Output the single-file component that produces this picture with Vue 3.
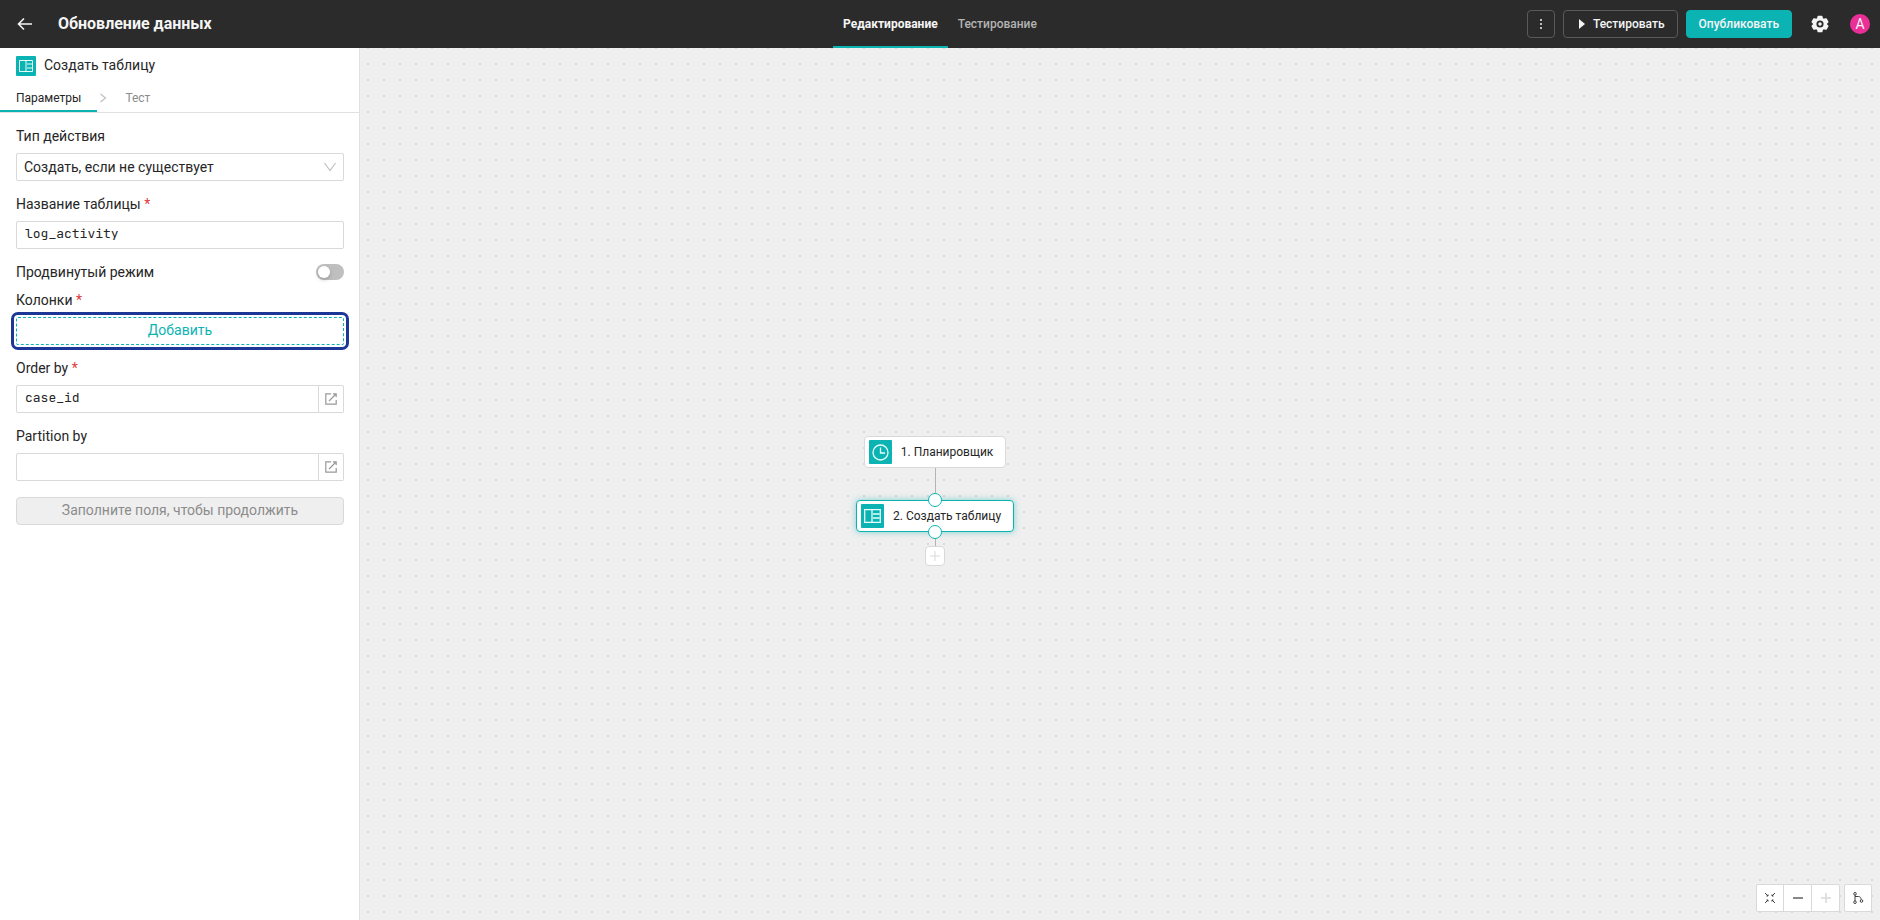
<script setup>
import { ref } from 'vue'

const action = ref('Создать, если не существует')
const tableName = ref('log_activity')
const advanced = ref(false)
const orderBy = ref('case_id')
const partitionBy = ref('')
</script>

<template>
  <div class="app">
    <header class="header">
      <div class="header-left">
        <button class="icon-button back" type="button" aria-label="Назад">
          <svg width="16" height="14" viewBox="0 0 16 14" fill="none" stroke="currentColor" stroke-width="1.6">
            <path d="M15 7H1.5M7 1.5 1.5 7 7 12.5" />
          </svg>
        </button>
        <h1 class="title">Обновление данных</h1>
      </div>
      <nav class="modes">
        <a class="mode active" href="#edit">Редактирование</a>
        <a class="mode" href="#test">Тестирование</a>
      </nav>
      <div class="header-right">
        <button class="button more" type="button" aria-label="Ещё">
          <svg width="4" height="12" viewBox="0 0 4 12" fill="#bfbfbf">
            <rect x="1" y="1" width="2" height="2" /><rect x="1" y="5" width="2" height="2" /><rect x="1" y="9" width="2" height="2" />
          </svg>
        </button>
        <button class="button run" type="button">
          <svg width="6" height="10" viewBox="0 0 6 10" fill="currentColor"><path d="M0 0 6 5 0 10Z" /></svg>
          Тестировать
        </button>
        <button class="button primary" type="button">Опубликовать</button>
        <button class="icon-button gear" type="button" aria-label="Настройки">
          <svg width="20" height="20" viewBox="0 0 24 24">
            <path fill="currentColor" stroke="currentColor" stroke-width="2" stroke-linejoin="round" d="M10 3h4l.7 2.800 1.800 1 2.700-.8 2 3.500-2 2v1l2 2-2 3.500-2.700-.8-1.800 1L14 21h-4l-.7-2.800-1.800-1-2.700.8-2-3.500 2-2v-1l-2-2L4.800 6l2.700.8 1.800-1Z" />
            <circle cx="12" cy="12" r="3.200" fill="currentColor" stroke="#2b2b2b" stroke-width="2.200" />
          </svg>
        </button>
        <button class="avatar" type="button">A</button>
      </div>
    </header>

    <div class="body">
      <aside class="sidebar">
        <div class="panel-head">
          <span class="tile small">
            <svg width="14" height="12" viewBox="0 0 14 12" fill="none" stroke="currentColor">
              <path d="M.5.5h13v11H.5ZM7 .5v11M8 4h5M8 8h5" />
            </svg>
          </span>
          <h2 class="panel-title">Создать таблицу</h2>
        </div>
        <nav class="steps">
          <a class="step active" href="#params">Параметры</a>
          <svg class="step-arrow" width="8" height="10" viewBox="0 0 8 10" fill="none" stroke="currentColor" stroke-width="1.2"><path d="M1.500 1 6.500 5 1.500 9" /></svg>
          <a class="step" href="#step-test">Тест</a>
        </nav>
        <form class="form" @submit.prevent>
          <div class="field">
            <label for="action">Тип действия</label>
            <div class="select-wrap">
              <select id="action" v-model="action" class="control">
                <option>Создать, если не существует</option>
              </select>
              <svg class="chevron" width="12" height="10" viewBox="0 0 12 10" fill="none" stroke="currentColor" stroke-width="1.200"><path d="M.5 1 6 8.500 11.500 1" /></svg>
            </div>
          </div>
          <div class="field">
            <label for="table-name">Название таблицы <span class="required">*</span></label>
            <input id="table-name" v-model="tableName" class="control mono" type="text" />
          </div>
          <div class="field">
            <div class="switch-row">
              <label for="advanced">Продвинутый режим</label>
              <input id="advanced" v-model="advanced" class="switch" type="checkbox" role="switch" />
            </div>
            <label for="add-column">Колонки <span class="required">*</span></label>
            <button id="add-column" class="add" type="button">Добавить</button>
          </div>
          <div class="field">
            <label for="order-by">Order by <span class="required">*</span></label>
            <div class="group">
              <input id="order-by" v-model="orderBy" class="control mono" type="text" />
              <button class="expand" type="button" aria-label="Открыть редактор Order by">
                <svg width="12" height="12" viewBox="0 0 12 12" fill="none" stroke="currentColor" stroke-width="1.200"><path d="M6 .8H.8v10.400h10.400V7M4 8 10.500 1.500M8 .8h3.200v3.200" /></svg>
              </button>
            </div>
          </div>
          <div class="field">
            <label for="partition-by">Partition by</label>
            <div class="group">
              <input id="partition-by" v-model="partitionBy" class="control mono" type="text" />
              <button class="expand" type="button" aria-label="Открыть редактор Partition by">
                <svg width="12" height="12" viewBox="0 0 12 12" fill="none" stroke="currentColor" stroke-width="1.200"><path d="M6 .8H.8v10.400h10.400V7M4 8 10.500 1.500M8 .8h3.200v3.200" /></svg>
              </button>
            </div>
          </div>
          <button class="submit" type="submit" disabled>Заполните поля, чтобы продолжить</button>
        </form>
      </aside>

      <main class="canvas">
        <div class="flow">
          <div class="node">
            <span class="tile">
              <svg width="17" height="17" viewBox="0 0 17 17" fill="none" stroke="currentColor" stroke-width="1.300"><circle cx="8.500" cy="8.500" r="7.500" /><path d="M8.500 3.500v5.500h4.500" /></svg>
            </span>
            1. Планировщик
          </div>
          <div class="edge long"></div>
          <div class="node selected">
            <span class="port top"></span>
            <span class="tile">
              <svg width="17" height="14" viewBox="0 0 17 14" fill="none" stroke="currentColor" stroke-width="1.300">
                <path d="M.7.7h15.600v12.600H.7ZM8 .7v12.600M9 5h6.500M9 9h6.500" />
              </svg>
            </span>
            2. Создать таблицу
            <span class="port bottom"></span>
          </div>
          <div class="edge"></div>
          <button class="add-node" type="button" aria-label="Добавить шаг">
            <svg width="10" height="10" viewBox="0 0 10 10" stroke="currentColor"><path d="M5 0v10M0 5h10" /></svg>
          </button>
        </div>

        <div class="tools">
          <div class="tool-group">
            <button class="tool" type="button" aria-label="Вписать в экран">
              <svg width="12" height="12" viewBox="0 0 12 12" fill="none" stroke="currentColor"><path d="M1 1 4 4M11 1 8 4M1 11 4 8M11 11 8 8M2.500 4H4V2.500M8 2.500V4h1.500M4 9.500V8H2.500M9.500 8H8v1.500" /></svg>
            </button>
            <button class="tool" type="button" aria-label="Уменьшить">
              <svg width="10" height="10" viewBox="0 0 10 10" stroke="#888888" stroke-width="2"><path d="M0 5h10" /></svg>
            </button>
            <button class="tool" type="button" aria-label="Увеличить" disabled>
              <svg width="10" height="10" viewBox="0 0 10 10" stroke="currentColor" stroke-width="1.500"><path d="M5 0v10M0 5h10" /></svg>
            </button>
          </div>
          <div class="tool-group">
            <button class="tool" type="button" aria-label="Упорядочить">
              <svg width="12" height="12" viewBox="0 0 12 12" fill="none" stroke="currentColor"><circle cx="3" cy="1.800" r="1.300" /><circle cx="3" cy="10.200" r="1.300" /><circle cx="9.500" cy="9" r="1.300" /><path d="M3 3v6M3 4.500h3.500a2.500 2.500 0 0 1 2.500 3" /></svg>
            </button>
          </div>
        </div>
      </main>
    </div>
  </div>
</template>

<style>
body {
  margin: 0;
}
</style>

<style scoped>
.app {
  display: flex;
  flex-direction: column;
  min-height: 100vh;
  font: 14px/22px Roboto, "Open Sans", sans-serif;
  color: #262626;
}
.app *,
.app *::before {
  box-sizing: border-box;
}
button,
input,
select {
  font: inherit;
  color: inherit;
  margin: 0;
}
button {
  display: flex;
  align-items: center;
  justify-content: center;
  padding: 0;
}
h1,
h2 {
  margin: 0;
}
a {
  color: inherit;
  text-decoration: none;
}

.header {
  display: grid;
  grid-template-columns: 1fr auto 1fr;
  height: 48px;
  background: #2b2b2b;
  color: #f5f5f5;
}
.header-left,
.header-right {
  display: flex;
  align-items: center;
}
.header-left {
  padding-left: 16px;
}
.icon-button {
  border: 0;
  background: none;
}
.back {
  width: 18px;
}
.title {
  margin-left: 24px;
  font-size: 16px;
  font-weight: 700;
}
.modes {
  display: flex;
}
.mode {
  display: flex;
  align-items: center;
  padding: 0 10px;
  border-bottom: 2px solid transparent;
  border-top: 2px solid transparent;
  font-size: 12px;
  font-weight: 500;
  color: #b3b3b3;
}
.mode.active {
  border-bottom-color: #0cb3b3;
  font-weight: 700;
  color: #f5f5f5;
}
.header-right {
  justify-content: flex-end;
  gap: 8px;
  padding-right: 10px;
}
.button {
  gap: 8px;
  height: 28px;
  padding: 0 12px;
  border: 1px solid #595959;
  border-radius: 4px;
  background: none;
  font-size: 12px;
  font-weight: 500;
}
.run {
  padding-left: 15px;
}
.more {
  width: 28px;
  padding: 0;
}
.primary {
  border-color: #0cb3b3;
  background: #0cb3b3;
}
.gear {
  width: 40px;
}
.avatar {
  width: 20px;
  height: 20px;
  margin-left: 2px;
  border: 0;
  border-radius: 50%;
  background: #eb2f96;
  font-size: 14px;
  line-height: 20px;
}

.body {
  display: flex;
  flex: 1;
}
.sidebar {
  flex: none;
  width: 360px;
  border-right: 1px solid #e0e0e0;
  background: #ffffff;
}
.panel-head {
  display: flex;
  align-items: center;
  gap: 8px;
  padding: 8px 16px 0;
}
.panel-title {
  font-size: 14px;
  line-height: 18px;
  padding-bottom: 2px;
  font-weight: 400;
}
.tile {
  display: flex;
  align-items: center;
  justify-content: center;
  width: 23px;
  height: 24px;
  border-radius: 1px;
  background: #0cb3b3;
  color: #e6fffb;
}
.tile.small {
  width: 20px;
  height: 20px;
}
.steps {
  display: flex;
  align-items: center;
  margin-top: 8px;
  border-bottom: 1px solid #e0e0e0;
  font-size: 12px;
}
.step {
  padding: 3px 16px 1px;
  border-bottom: 2px solid transparent;
  color: #8c8c8c;
}
.step.active {
  border-color: #0cb3b3;
  color: #262626;
}
.step-arrow {
  margin-left: 2px;
  color: #bfbfbf;
}
.step-arrow + .step {
  padding-left: 18px;
}

.form {
  display: flex;
  flex-direction: column;
  gap: 12px;
  padding: 12px 15px 12px 16px;
}
.field {
  display: flex;
  flex-direction: column;
  gap: 6px;
}
.required {
  color: #e0383e;
}
.control {
  width: 100%;
  height: 28px;
  padding: 0 8px;
  border: 1px solid #d9d9d9;
  border-radius: 2px;
  background: #ffffff;
  outline: none;
}
select.control {
  appearance: none;
  padding: 0 28px 1px 7px;
}
.mono {
  padding-bottom: 3px;
  font-family: "JetBrains Mono", "DejaVu Sans Mono", monospace;
  font-size: 13px;
}
.select-wrap {
  position: relative;
}
.chevron {
  position: absolute;
  top: 9px;
  right: 8px;
  color: #bfbfbf;
  pointer-events: none;
}
.switch-row {
  display: flex;
  align-items: center;
  justify-content: space-between;
}
.switch {
  appearance: none;
  width: 28px;
  height: 16px;
  padding: 2px;
  border-radius: 8px;
  background: #bfbfbf;
}
.switch::before {
  content: "";
  display: block;
  width: 12px;
  height: 12px;
  border-radius: 50%;
  background: #ffffff;
  box-shadow: 0 2px 4px rgba(0, 35, 11, 0.2);
}
.switch:checked {
  padding-left: 14px;
  background: #0cb3b3;
}
.add {
  height: 28px;
  padding-bottom: 2px;
  border: 1px dashed #0cb3b3;
  border-radius: 2px;
  outline: 3px solid #1d3797;
  outline-offset: 2px;
  background: #ffffff;
  color: #0cb3b3;
}
.group {
  display: flex;
}
.group .control {
  flex: 1;
  min-width: 0;
  border-radius: 2px 0 0 2px;
}
.expand {
  width: 25px;
  border: 1px solid #d9d9d9;
  border-left: 0;
  border-radius: 0 2px 2px 0;
  background: #ffffff;
  color: #999999;
}
.submit {
  height: 28px;
  margin-top: 4px;
  padding-bottom: 2px;
  border: 1px solid #d9d9d9;
  border-radius: 4px;
  background: #efefef;
  color: #8c8c8c;
}

.canvas {
  position: relative;
  flex: 1;
  background: conic-gradient(from 90deg at 14px 14px, #d9d9d9 90deg, #efefef 0) 9px 1px / 16px 16px;
}
.flow {
  position: absolute;
  top: 388px;
  left: 496px;
  display: flex;
  flex-direction: column;
  align-items: center;
}
.node {
  position: relative;
  display: flex;
  align-items: center;
  gap: 9px;
  height: 32px;
  padding: 0 12px 0 4px;
  border: 1px solid #d9d9d9;
  border-radius: 4px;
  background: #ffffff;
  font-size: 12px;
}
.node.selected {
  border-color: #0cb3b3;
  box-shadow: 0 0 6px rgba(12, 179, 179, 0.5);
}
.port {
  position: absolute;
  left: calc(50% - 7px);
  width: 14px;
  height: 14px;
  border: 1px solid #0cb3b3;
  border-radius: 50%;
  background: #ffffff;
}
.port.top {
  top: -8px;
}
.port.bottom {
  bottom: -8px;
}
.edge {
  width: 1px;
  height: 14px;
  background: #b3b3b3;
}
.edge.long {
  height: 32px;
}
.add-node {
  width: 20px;
  height: 20px;
  border: 1px solid #d9d9d9;
  border-radius: 4px;
  background: #ffffff;
  color: #d9d9d9;
}
.tools {
  position: absolute;
  right: 8px;
  bottom: 8px;
  display: flex;
  gap: 4px;
}
.tool-group {
  display: flex;
  border: 1px solid #d9d9d9;
  border-radius: 2px;
  background: #ffffff;
}
.tool {
  width: 26px;
  height: 26px;
  border: 0;
  background: none;
  color: #404040;
}
.tool + .tool {
  width: 28px;
  border-left: 1px solid #d9d9d9;
}
.tool:disabled {
  color: #d9d9d9;
}
</style>
